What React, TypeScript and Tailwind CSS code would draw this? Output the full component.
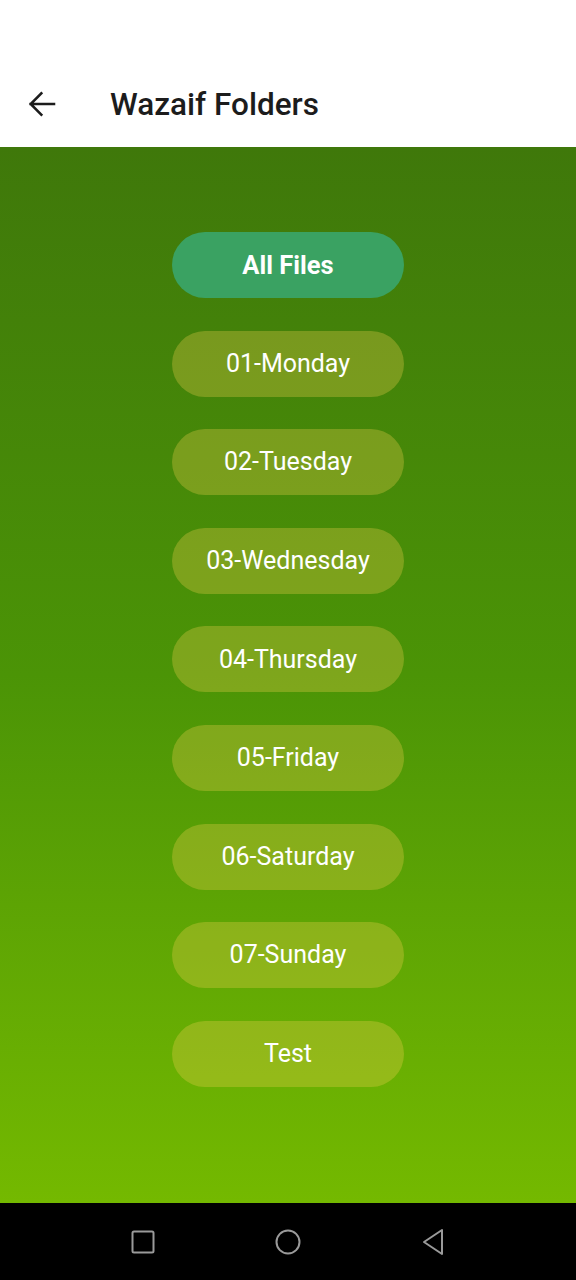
const folders = [
  "01-Monday",
  "02-Tuesday",
  "03-Wednesday",
  "04-Thursday",
  "05-Friday",
  "06-Saturday",
  "07-Sunday",
  "Test",
];

export default function App() {
  return (
    <div className="flex h-[1280px] w-[576px] flex-col bg-white font-['Roboto',sans-serif]">
      {/* Top bar */}
      <header className="flex h-[147px] items-end bg-white pb-[19px]">
        <div className="flex items-center">
          <svg
            className="ml-[26px] h-[32px] w-[32px]"
            viewBox="0 0 24 24"
            fill="none"
            stroke="#1c1c1c"
            strokeWidth="1.9"
            strokeLinecap="square"
          >
            <path d="M21 12H3.5M11.5 4l-8 8 8 8" />
          </svg>
          <h1 className="ml-[52px] text-[31.5px] font-medium text-[#1c1c1c]">Wazaif Folders</h1>
        </div>
      </header>

      {/* Folder list */}
      <main className="flex flex-1 flex-col items-center gap-[32.6px] bg-gradient-to-b from-[#3f780a] via-[#4b9406] to-[#74b900] pt-[85px]">
        <button className="h-[66px] w-[232px] rounded-full bg-[#3aa262] text-[25.5px] font-bold text-white">
          All Files
        </button>
        {folders.map((name) => (
          <button
            key={name}
            className="h-[66px] w-[232px] rounded-full bg-[#f4d050]/30 text-[25px] text-white"
          >
            {name}
          </button>
        ))}
      </main>

      {/* Android nav bar */}
      <nav className="flex h-[77px] items-center justify-center gap-[120px] bg-black">
        <svg width="24" height="24" viewBox="0 0 24 24" fill="none" stroke="#9a9a9a" strokeWidth="2">
          <rect x="1.5" y="1.5" width="21" height="21" rx="1.5" />
        </svg>
        <svg width="26" height="26" viewBox="0 0 26 26" fill="none" stroke="#9a9a9a" strokeWidth="2">
          <circle cx="13" cy="13" r="11.5" />
        </svg>
        <svg width="24" height="28" viewBox="0 0 24 28" fill="none" stroke="#9a9a9a" strokeWidth="2" strokeLinejoin="round">
          <path d="M21 2 L3 14 L21 26 Z" />
        </svg>
      </nav>
    </div>
  );
}
